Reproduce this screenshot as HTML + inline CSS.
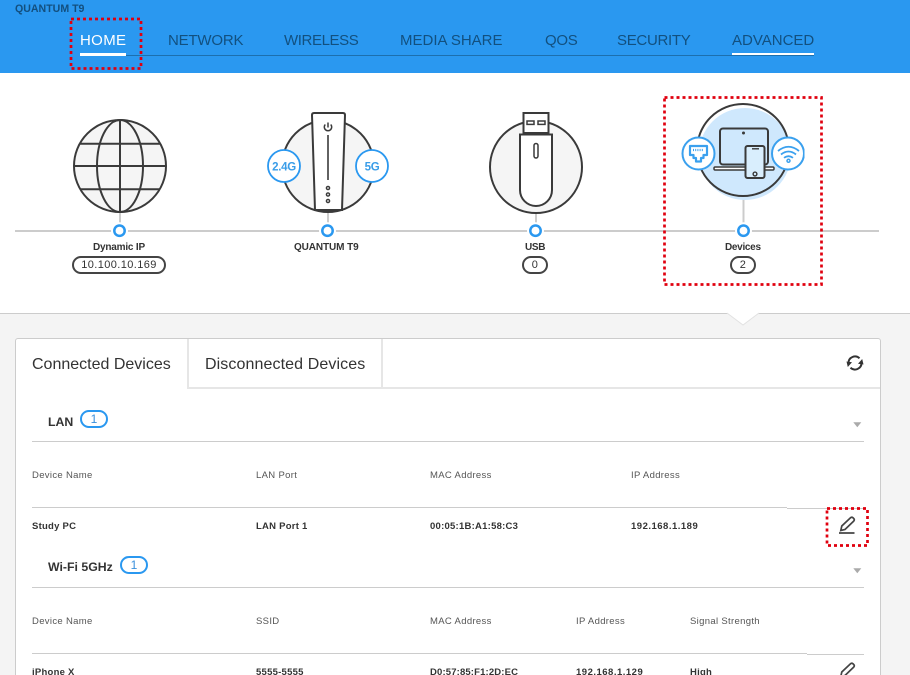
<!DOCTYPE html>
<html><head><meta charset="utf-8"><title>QUANTUM T9</title>
<style>
html,body{margin:0;padding:0;width:910px;height:675px;overflow:hidden;background:#f4f4f4;font-family:"Liberation Sans",sans-serif;color:#333}
#root{position:relative;width:910px;height:675px;overflow:hidden}
.a{position:absolute}
.t{position:absolute;white-space:nowrap;line-height:14px}
.nav{font-size:15px;color:#12507f;top:33.5px}
.lb{font-size:10px;font-weight:bold;color:#333;top:241px}
.pill{position:absolute;box-sizing:border-box;border:2px solid #444;border-radius:9px;height:18px;top:256px;background:#fff;text-align:center;font-size:11px;line-height:15px;letter-spacing:.4px;color:#333}
.bp{position:absolute;box-sizing:border-box;border:2px solid #2a98f0;border-radius:9px;width:28px;height:18px;left:80px;background:#fff;text-align:center;font-size:12px;line-height:15px;color:#3a8fdc}
.th{font-size:9.5px;color:#555;letter-spacing:.33px}
.td{font-size:9.5px;font-weight:bold;color:#333;letter-spacing:.25px}
.dg{letter-spacing:.5px}
.h{font-size:12.3px;font-weight:bold;color:#333}
.ln{position:absolute;height:1px;background:#ccc}
</style></head><body><div id="root">

<div class="a" style="left:0;top:0;width:910px;height:73px;background:#2a98f0"></div>
<div class="t" style="left:15px;top:2px;font-size:10.6px;font-weight:bold;color:#134f7e">QUANTUM T9</div>
<div class="a" style="left:126px;top:55px;width:688px;height:1px;background:#1c6fae"></div>
<div class="t nav" style="left:80px;color:#fff;letter-spacing:.35px">HOME</div>
<div class="a" style="left:80px;top:53px;width:46px;height:3px;background:#fff"></div>
<div class="t nav" style="left:168px;letter-spacing:-.2px">NETWORK</div>
<div class="t nav" style="left:284px;letter-spacing:-.4px">WIRELESS</div>
<div class="t nav" style="left:400px">MEDIA SHARE</div>
<div class="t nav" style="left:545px;letter-spacing:-.3px">QOS</div>
<div class="t nav" style="left:617px;letter-spacing:-.3px">SECURITY</div>
<div class="t nav" style="left:732px">ADVANCED</div>
<div class="a" style="left:732px;top:53px;width:82px;height:2px;background:#fff"></div>

<div class="a" style="left:0;top:73px;width:910px;height:240px;background:#fff;border-bottom:1px solid #ccc"></div>

<svg class="a" style="left:0;top:0" width="910" height="340" viewBox="0 0 910 340" fill="none">
<path d="M727 313 L743 325 L759 313 Z" fill="#fff"/>
<path d="M727 313 L743 325 L759 313" stroke="#e2e2e2"/>
<line x1="15" y1="231" x2="879" y2="231" stroke="#ccc" stroke-width="2"/>
<g stroke="#ccc" stroke-width="2"><line x1="120" y1="212" x2="120" y2="226"/><line x1="328" y1="212" x2="328" y2="226"/><line x1="536" y1="212" x2="536" y2="226"/><line x1="743.5" y1="198" x2="743.5" y2="226"/></g>
<g fill="#fff"><circle cx="119.500" cy="230.700" r="8.500"/><circle cx="327.500" cy="230.700" r="8.500"/><circle cx="535.500" cy="230.700" r="8.500"/><circle cx="743.500" cy="230.700" r="8.500"/></g>
<g fill="#fff" stroke="#2a98f0" stroke-width="2.500"><circle cx="119.500" cy="230.700" r="5.200"/><circle cx="327.500" cy="230.700" r="5.200"/><circle cx="535.500" cy="230.700" r="5.200"/><circle cx="743.500" cy="230.700" r="5.200"/></g>

<!-- globe -->
<g stroke="#3a3a3a" stroke-width="2">
<circle cx="120" cy="166" r="46" fill="#f5f5f5"/>
<ellipse cx="120" cy="166" rx="23" ry="46"/>
<line x1="120" y1="120" x2="120" y2="212"/>
<line x1="74" y1="166" x2="166" y2="166"/>
<line x1="80" y1="143.700" x2="160" y2="143.700"/>
<line x1="80" y1="189.300" x2="160" y2="189.300"/>
</g>

<!-- router -->
<circle cx="328" cy="166" r="46" fill="#f5f5f5" stroke="#3a3a3a" stroke-width="2"/>
<path d="M312 115 Q312 113 314 113 H343 Q345 113 345 115 L342 210 H315 Z" fill="#fff" stroke="#3a3a3a" stroke-width="2"/>
<line x1="328" y1="135" x2="328" y2="180" stroke="#3a3a3a" stroke-width="1.600"/>
<path d="M325.300 124.500 a3.700 3.700 0 1 0 5.400 0" stroke="#3a3a3a" stroke-width="1.500"/>
<line x1="328" y1="122.500" x2="328" y2="127.500" stroke="#3a3a3a" stroke-width="1.500"/>
<g stroke="#3a3a3a" stroke-width="1.400" fill="#eee"><circle cx="328" cy="188" r="1.600"/><circle cx="328" cy="194.500" r="1.600"/><circle cx="328" cy="201" r="1.600"/></g>
<circle cx="284" cy="166" r="16" fill="#fff" stroke="#2a98f0" stroke-width="1.800"/>
<circle cx="372" cy="166" r="16" fill="#fff" stroke="#2a98f0" stroke-width="1.800"/>
<text x="284" y="170.500" text-anchor="middle" font-family="Liberation Sans" font-weight="bold" font-size="11.500" letter-spacing="-.3" fill="#3a9de8" stroke="none">2.4G</text>
<text x="372" y="170.500" text-anchor="middle" font-family="Liberation Sans" font-weight="bold" font-size="11.500" letter-spacing="-.3" fill="#3a9de8" stroke="none">5G</text>

<!-- usb -->
<circle cx="536" cy="167" r="46" fill="#f5f5f5" stroke="#3a3a3a" stroke-width="2"/>
<rect x="523.500" y="113" width="25" height="20" fill="#fff" stroke="#3a3a3a" stroke-width="2"/>
<rect x="527" y="121" width="7" height="3.400" fill="#fff" stroke="#3a3a3a" stroke-width="1.500"/>
<rect x="538" y="121" width="7" height="3.400" fill="#fff" stroke="#3a3a3a" stroke-width="1.500"/>
<path d="M520 134.500 H552 V190 A16 16 0 0 1 520 190 Z" fill="#fff" stroke="#3a3a3a" stroke-width="2"/>
<rect x="534" y="143.500" width="4" height="14.500" rx="2" fill="#fff" stroke="#3a3a3a" stroke-width="1.500"/>

<!-- devices -->
<circle cx="745" cy="154" r="46" fill="#cfe8fd"/>
<circle cx="743" cy="150" r="46" stroke="#3a3a3a" stroke-width="2"/>
<rect x="720" y="128.500" width="48" height="36" rx="3" fill="#cfe8fd" stroke="#3a3a3a" stroke-width="2"/>
<circle cx="743.500" cy="133" r="1.500" fill="#3a3a3a"/>
<rect x="714" y="167" width="60" height="3" rx="1.200" fill="#fff" stroke="#3a3a3a" stroke-width="1.500"/>
<rect x="745.500" y="146" width="19" height="32" rx="2" fill="#d9eefd" stroke="#3a3a3a" stroke-width="2"/>
<line x1="752" y1="148.800" x2="759" y2="148.800" stroke="#3a3a3a" stroke-width="1.400"/>
<circle cx="755" cy="174" r="1.900" stroke="#3a3a3a" stroke-width="1.400"/>
<circle cx="698.500" cy="153.500" r="16" fill="#fff" stroke="#3aa0ee" stroke-width="2"/>
<path d="M690 146 H707 V155 H703.500 V158 H701 V161.500 H696 V158 H693.500 V155 H690 Z" stroke="#3aa0ee" stroke-width="2.200" stroke-linejoin="round"/>
<path d="M693 150 H704" stroke="#3aa0ee" stroke-width="2.200" stroke-dasharray="1 1.200"/>
<svg x="770" y="135" width="34.500" height="38" viewBox="770 135 34.500 38" fill="none">
<circle cx="788" cy="153.500" r="16" fill="#fff" stroke="#3aa0ee" stroke-width="2"/>
<path d="M778 151 Q788.500 142.500 799 151" stroke="#3aa0ee" stroke-width="1.800"/>
<path d="M781 154.500 Q788.500 148.500 796 154.500" stroke="#3aa0ee" stroke-width="1.800"/>
<path d="M784 157.800 Q788.500 154.500 793 157.800" stroke="#3aa0ee" stroke-width="1.800"/>
<circle cx="788.500" cy="160.800" r="1.500" stroke="#3aa0ee" stroke-width="1.500"/>
</svg>
</svg>

<div class="t lb" style="left:93px;letter-spacing:-.2px">Dynamic IP</div>
<div class="pill" style="left:72px;width:94px">10.100.10.169</div>
<div class="t lb" style="left:294px;letter-spacing:-.1px">QUANTUM T9</div>
<div class="t lb" style="left:525px;letter-spacing:-.3px">USB</div>
<div class="pill" style="left:522px;width:26px">0</div>
<div class="t lb" style="left:725px;letter-spacing:-.3px">Devices</div>
<div class="pill" style="left:730px;width:26px">2</div>

<!-- card -->
<div class="a" style="left:15px;top:338px;width:866px;height:340px;box-sizing:border-box;background:#fff;border:1px solid #ccc;border-radius:3px"></div>
<div class="a" style="left:187px;top:339px;width:2px;height:49px;background:#e6e6e6"></div>
<div class="a" style="left:380.500px;top:339px;width:2px;height:49px;background:#e6e6e6"></div>
<div class="a" style="left:187px;top:387px;width:693px;height:2px;background:#e6e6e6"></div>
<div class="t" style="left:32px;top:358px;font-size:16px;color:#333">Connected Devices</div>
<div class="t" style="left:205px;top:358px;font-size:16px;color:#333;letter-spacing:.1px">Disconnected Devices</div>

<svg class="a" style="left:845px;top:353px" width="20" height="20" viewBox="845 353 20 20" fill="none">
<path d="M848.500 363 A6.500 6.500 0 0 1 859.500 358.300" stroke="#333" stroke-width="2"/>
<path d="M861.500 363 A6.500 6.500 0 0 1 850.500 367.700" stroke="#333" stroke-width="2"/>
<path d="M846.500 361.500 L852 362.300 L847.800 367 Z" fill="#333"/>
<path d="M863.500 364.500 L858 363.700 L862.200 359 Z" fill="#333"/>
</svg>

<div class="t h" style="left:48px;top:414.500px">LAN</div>
<div class="bp" style="top:410px">1</div>
<div class="ln" style="left:32px;top:441px;width:832px"></div>
<svg class="a" style="left:852px;top:421px" width="11" height="8"><path d="M1.300 1.200H9.300L5.300 6.200Z" fill="#aaa"/></svg>

<div class="t th" style="left:32px;top:469px">Device Name</div>
<div class="t th" style="left:256px;top:469px">LAN Port</div>
<div class="t th" style="left:430px;top:469px">MAC Address</div>
<div class="t th" style="left:631px;top:469px">IP Address</div>
<div class="ln" style="left:32px;top:507px;width:755px"></div>
<div class="ln" style="left:787px;top:508px;width:77px"></div>
<div class="t td" style="left:32px;top:520px">Study PC</div>
<div class="t td" style="left:256px;top:520px">LAN Port 1</div>
<div class="t td" style="left:430px;top:520px">00:05:1B:A1:58:C3</div>
<div class="t td dg" style="left:631px;top:520px">192.168.1.189</div>

<div class="t h" style="left:48px;top:560px">Wi-Fi 5GHz</div>
<div class="bp" style="top:556px;left:120px">1</div>
<div class="ln" style="left:32px;top:587px;width:832px"></div>
<svg class="a" style="left:852px;top:567px" width="11" height="8"><path d="M1.300 1.200H9.300L5.300 6.200Z" fill="#aaa"/></svg>

<div class="t th" style="left:32px;top:615px">Device Name</div>
<div class="t th" style="left:256px;top:615px">SSID</div>
<div class="t th" style="left:430px;top:615px">MAC Address</div>
<div class="t th" style="left:576px;top:615px">IP Address</div>
<div class="t th" style="left:690px;top:615px">Signal Strength</div>
<div class="ln" style="left:32px;top:653px;width:775px"></div>
<div class="ln" style="left:807px;top:654px;width:57px"></div>
<div class="t td" style="left:32px;top:666px">iPhone X</div>
<div class="t td" style="left:256px;top:666px">5555-5555</div>
<div class="t td" style="left:430px;top:666px;letter-spacing:.15px">D0:57:85:F1:2D:EC</div>
<div class="t td dg" style="left:576px;top:666px">192.168.1.129</div>
<div class="t td" style="left:690px;top:666px">High</div>

<svg class="a" style="left:0;top:0" width="910" height="675" viewBox="0 0 910 675" fill="none">
<path d="M840.800 530.500 L841.800 526 L850.500 517.800 Q851.800 516.800 853 517.800 L853.800 518.600 Q854.800 519.800 853.800 521 L845 529.500 Z" stroke="#444" stroke-width="1.700"/>
<line x1="839" y1="533" x2="854.500" y2="533" stroke="#333" stroke-width="1.600"/>
<path d="M840.800 676.500 L841.800 672 L850.500 663.800 Q851.800 662.800 853 663.800 L853.800 664.600 Q854.800 665.800 853.800 667 L845 675.500 Z" stroke="#444" stroke-width="1.700"/>
<g stroke="#e0000f" stroke-width="2.700" stroke-dasharray="3 3">
<rect x="71" y="19" width="70" height="49.500"/>
<rect x="664.500" y="97.500" width="157" height="187"/>
<rect x="827" y="508.500" width="40.500" height="37"/>
</g>
</svg>
</div></body></html>
